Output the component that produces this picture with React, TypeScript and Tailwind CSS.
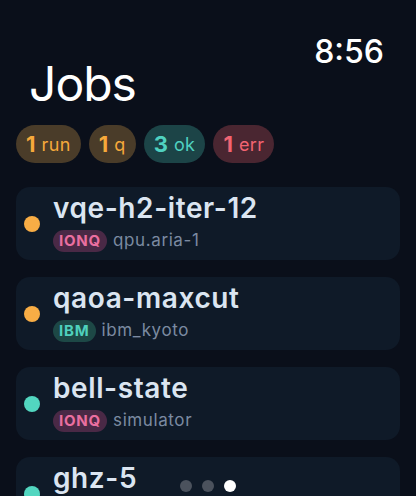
import React from 'react';

const font = { fontFamily: 'Inter, "Noto Sans", sans-serif' };

type Tone = 'amber' | 'teal' | 'red' | 'pink';

const pillTone: Record<string, string> = {
  amber: 'bg-[#4a3c29] text-[#f6a93b]',
  teal: 'bg-[#1c4447] text-[#4fd1c0]',
  red: 'bg-[#4a2631] text-[#f26472]',
};

const badgeTone: Record<string, string> = {
  pink: 'bg-[#4a2946] text-[#ea6fa0]',
  teal: 'bg-[#1d4846] text-[#4fd1bd]',
};

const dotTone: Record<string, string> = {
  amber: 'bg-[#f8ad45]',
  teal: 'bg-[#52d6c0]',
};

const counts: { n: number; label: string; tone: Tone }[] = [
  { n: 1, label: 'run', tone: 'amber' },
  { n: 1, label: 'q', tone: 'amber' },
  { n: 3, label: 'ok', tone: 'teal' },
  { n: 1, label: 'err', tone: 'red' },
];

const jobs: { name: string; vendor: string; vendorTone: Tone; backend: string; status: Tone }[] = [
  { name: 'vqe-h2-iter-12', vendor: 'IONQ', vendorTone: 'pink', backend: 'qpu.aria-1', status: 'amber' },
  { name: 'qaoa-maxcut', vendor: 'IBM', vendorTone: 'teal', backend: 'ibm_kyoto', status: 'amber' },
  { name: 'bell-state', vendor: 'IONQ', vendorTone: 'pink', backend: 'simulator', status: 'teal' },
  { name: 'ghz-5', vendor: 'IBM', vendorTone: 'teal', backend: 'ibm_osaka', status: 'teal' },
];

export default function App() {
  return (
    <div className="relative h-[496px] w-[416px] overflow-hidden bg-[#0a0f1a]" style={font}>
      <div className="flex flex-col px-4 pt-[40px]">
        {/* status time */}
        <div className="pr-[16px] text-right text-[32px] leading-[24px] font-medium text-white">8:56</div>

        <h1 className="pl-[13px] text-[48px] leading-[40px] font-normal tracking-[-1px] text-white">Jobs</h1>

        {/* counters */}
        <div className="mt-[21px] flex gap-2">
          {counts.map((c, i) => (
            <div
              key={i}
              className={`flex h-[38px] items-center gap-[6px] rounded-full px-[10px] ${pillTone[c.tone]}`}
            >
              <span className="text-[22px] font-bold">{c.n}</span>
              <span className="text-[18px] tracking-[0.4px]">{c.label}</span>
            </div>
          ))}
        </div>

        {/* job list */}
        <div className="mt-[24px] flex flex-col gap-[17px]">
          {jobs.map((j) => (
            <div key={j.name} className="flex h-[73px] items-center gap-[13px] rounded-[14px] bg-[#0f1a28] px-2">
              <div className={`h-4 w-4 shrink-0 rounded-full ${dotTone[j.status]}`} />
              <div className="flex flex-col">
                <div className="text-[28px] leading-[30px] font-semibold tracking-[0.6px] text-[#dbe5f1]">{j.name}</div>
                <div className="mt-[5px] flex items-center gap-[6px]">
                  <span
                    className={`flex h-[22px] items-center rounded-full px-[6px] text-[15px] font-bold tracking-[0.8px] ${badgeTone[j.vendorTone]}`}
                  >
                    {j.vendor}
                  </span>
                  <span className="text-[17px] tracking-[0.6px] text-[#7b8aa1]">{j.backend}</span>
                </div>
              </div>
            </div>
          ))}
        </div>
      </div>

      {/* page indicator */}
      <div className="absolute bottom-[4px] left-1/2 flex -translate-x-1/2 gap-[10px]">
        <div className="h-3 w-3 rounded-full bg-[#4b525d]" />
        <div className="h-3 w-3 rounded-full bg-[#4b525d]" />
        <div className="h-3 w-3 rounded-full bg-white" />
      </div>
    </div>
  );
}
